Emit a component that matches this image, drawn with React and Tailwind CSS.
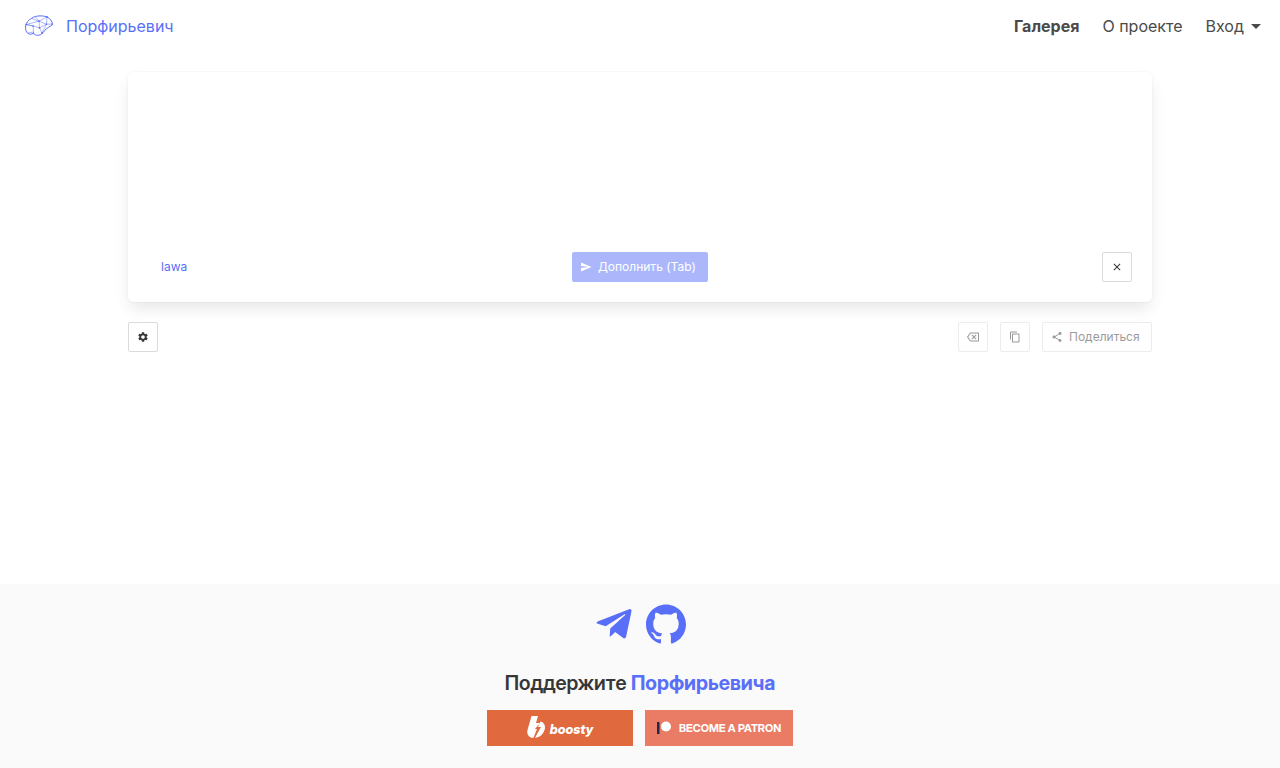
import { MdSend, MdClose, MdSettings, MdOutlineBackspace, MdContentCopy, MdShare } from "react-icons/md";
import { FaTelegramPlane } from "react-icons/fa";
import { SiGithub } from "react-icons/si";

function BrainLogo() {
  return (
    <svg viewBox="0 0 28 22" className="h-[22px] w-7" fill="none" stroke="currentColor" strokeLinejoin="round" aria-hidden="true">
      <path
        strokeWidth="1"
        d="M.6 11C1.200 7.500 3.500 5 6.500 3.400 9 1.600 12 .9 15 .9c3 0 5.500.3 7.500 1.400 3 1.600 4.800 4 5 7.200-1 1.700-3.500 2-5.200 3.500-1.800 1.300-2.600 3-4.300 4.700-1.500 1.700-3.500 2.700-5.500 2.600-1.800 0-3-.8-4-2-1.800 1.200-4 1.200-5.700 0C.8 17 .4 14 .6 11Z"
      />
      <path
        strokeWidth="0.5"
        d="M1.200 9.500 14 6.200 22 2M6.500 3.400 14 6.200l7.500 3L27 9M10 1.500l4 4.700.5 6.600 7-3.600L22 2M1.200 9.500l7 1.500 6.300 1.800M8.200 11l.3 7.300M1.200 9.500l7 1.500M14.500 12.800 17 18M3 18l5.500-1M17 18l4.500-8.800"
      />
      <g fill="currentColor" stroke="none">
        <circle cx="14" cy="6.200" r=".9" />
        <circle cx="14.500" cy="12.800" r=".9" />
        <circle cx="22" cy="2" r=".9" />
        <circle cx="21.500" cy="9.200" r=".8" />
        <circle cx="8.200" cy="11" r=".8" />
        <circle cx="8.500" cy="18.300" r=".8" />
        <circle cx="17" cy="18" r=".9" />
        <circle cx="1.200" cy="9.500" r=".8" />
        <circle cx="27" cy="9.200" r=".8" />
      </g>
    </svg>
  );
}

function BoostyMark() {
  return (
    <svg viewBox="0 0 18 22" className="h-[22px] w-[18px]" fill="currentColor" aria-hidden="true">
      <path d="M4.500 0H11L9 7h4L8 13h2L6.500 21.800C2 21.800-.6 18.500.5 14Z" />
      <path d="M13.500 5.500c3.600.8 5.200 4.200 4.200 8-1.100 4.400-5 7.900-9.700 8.300L14 11h-3Z" />
    </svg>
  );
}

const iconButton =
  "flex size-[30px] items-center justify-center rounded-[2px] border border-[#dbdbdb] bg-white text-[#363636]";

export default function App() {
  return (
    <div className="flex min-h-screen flex-col bg-white font-['Inter','Liberation_Sans',sans-serif] text-base text-[#4a4a4a]">
      <header className="flex h-[52px] items-center justify-between pr-[19px] pl-[25px]">
        <a href="#" className="flex items-center gap-[13px] text-[#596ff7]">
          <BrainLogo />
          Порфирьевич
        </a>
        <nav className="flex items-center gap-[23px]">
          <a href="#gallery" className="font-bold">Галерея</a>
          <a href="#about">О проекте</a>
          <button type="button" className="flex items-center gap-[7px]">
            Вход
            <svg viewBox="0 0 10 5" className="h-[5px] w-[10px]" fill="currentColor" aria-hidden="true">
              <path d="M0 0h10L5 5Z" />
            </svg>
          </button>
        </nav>
      </header>

      <main className="mx-auto flex w-4/5 grow flex-col gap-5 pt-5 text-xs">
        <section className="flex h-[230px] flex-col rounded-md bg-white p-5 shadow-[0_8px_16px_-2px_rgba(10,10,10,0.1),0_0_0_1px_rgba(10,10,10,0.02)]">
          <textarea aria-label="Текст истории" className="w-full grow resize-none bg-transparent px-3 text-base outline-none" />
          <div className="grid grid-cols-3 items-center">
            <a href="#model" className="justify-self-start pl-[13px] text-[#596ff7]">lawa</a>
            <button type="button" disabled className="flex h-[30px] w-[136px] items-center gap-[6px] justify-self-center rounded-[2px] bg-[#acb7fb] pl-2 whitespace-nowrap text-white">
              <MdSend className="size-3" />
              Дополнить (Tab)
            </button>
            <button type="button" aria-label="Очистить" className={`${iconButton} justify-self-end`}>
              <MdClose className="size-3" />
            </button>
          </div>
        </section>
        <div className="flex items-center justify-between">
          <button type="button" aria-label="Настройки" className={iconButton}>
            <MdSettings className="size-3" />
          </button>
          <div className="flex gap-3">
            <button type="button" disabled aria-label="Стереть" className={`${iconButton} opacity-50`}>
              <MdOutlineBackspace className="size-3" />
            </button>
            <button type="button" disabled aria-label="Копировать" className={`${iconButton} opacity-50`}>
              <MdContentCopy className="size-3" />
            </button>
            <button type="button" disabled className="flex h-[30px] w-[110px] items-center gap-[6px] rounded-[2px] border border-[#dbdbdb] bg-white pl-2 text-[#363636] opacity-50">
              <MdShare className="size-3" />
              Поделиться
            </button>
          </div>
        </div>
      </main>

      <footer className="flex h-[184px] flex-col items-center bg-[#fafafa] pt-5 font-['Inter_Display','Inter','Liberation_Sans',sans-serif]">
        <div className="flex gap-3 text-[#596ff7]">
          <a href="#telegram" aria-label="Telegram">
            <FaTelegramPlane className="size-10" />
          </a>
          <a href="#github" aria-label="GitHub">
            <SiGithub className="size-10" />
          </a>
        </div>
        <h2 className="mt-6 text-xl leading-[30px] font-semibold text-[#363636]">
          Поддержите <a href="#support" className="font-bold text-[#596ff7]">Порфирьевича</a>
        </h2>
        <div className="mt-3 flex gap-3 text-white">
          <a href="#boosty" className="flex h-9 w-[146px] items-start justify-center gap-[5px] bg-[#e0693e] pt-[6px]">
            <BoostyMark />
            <span className="pt-1 text-[13px] leading-[18px] font-extrabold italic">boosty</span>
          </a>
          <a href="#patreon" className="flex h-9 w-[148px] items-center gap-2 bg-[#ea7b65] pl-3">
            <svg viewBox="0 0 14 14" className="size-[14px]" aria-hidden="true">
              <path fill="#1f2a50" d="M0 1h2.500v12H0z" />
              <circle cx="9" cy="5.500" r="5" fill="#fff" />
            </svg>
            <span className="text-[11px] font-bold whitespace-nowrap">BECOME A PATRON</span>
          </a>
        </div>
      </footer>
    </div>
  );
}
